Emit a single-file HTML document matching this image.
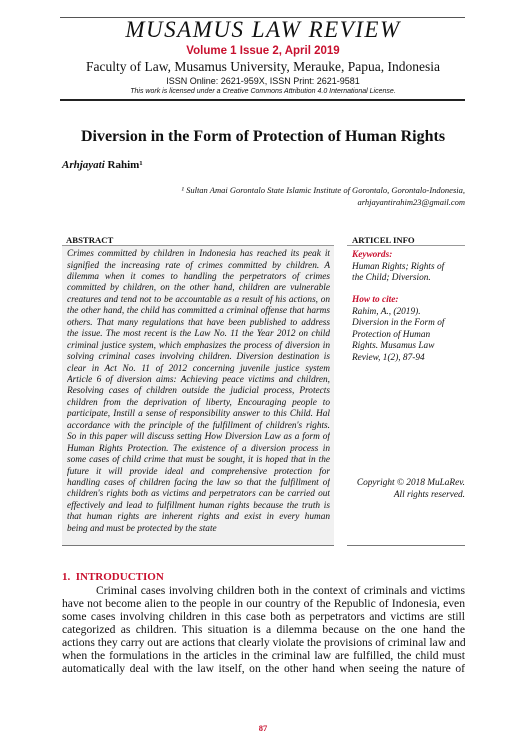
<!DOCTYPE html>
<html><head><meta charset="utf-8"><style>
*{margin:0;padding:0;box-sizing:border-box}
body{width:526px;height:751px;background:#fff;position:relative;font-family:"Liberation Serif",serif;color:#111;overflow:hidden}
.a{position:absolute;white-space:nowrap}
.j{position:absolute;text-align:justify;text-align-last:justify;white-space:nowrap;overflow:hidden}
.c{left:0;width:526px;text-align:center}
.ab .j{left:67px;width:263px;font-size:9.3px;font-style:italic;height:12px;line-height:12px}
.in .j{left:62px;width:403px;font-size:11.6px;height:14px;line-height:14px}
.inf{position:absolute;left:352px;font-size:9.3px;font-style:italic;line-height:11.5px}
.red{color:#c8102e}
</style></head><body>
<div class="a" style="left:60px;top:17px;width:405px;border-top:1px solid #555"></div>
<div class="a c" style="top:17px;font-size:23px;font-style:italic;letter-spacing:1.5px;font-family:'Liberation Serif',serif">MUSAMUS LAW REVIEW</div>
<div class="a c red" style="top:45px;font-size:11.5px;font-weight:bold;font-family:'Liberation Sans',sans-serif">Volume 1 Issue 2, April 2019</div>
<div class="a c" style="top:59px;font-size:13.5px">Faculty of Law, Musamus University, Merauke, Papua, Indonesia</div>
<div class="a c" style="top:76px;font-size:9px;font-family:'Liberation Sans',sans-serif">ISSN Online: 2621-959X, ISSN Print: 2621-9581</div>
<div class="a c" style="top:88px;font-size:7px;font-style:italic;font-family:'Liberation Sans',sans-serif">This work is licensed under a Creative Commons Attribution 4.0 International License.</div>
<div class="a" style="left:60px;top:99px;width:405px;border-top:2px solid #222"></div>
<div class="a c" style="top:128px;font-size:16px;font-weight:bold">Diversion in the Form of Protection of Human Rights</div>
<div class="a" style="left:62px;top:159px;font-size:11px;font-weight:bold"><i>Arhjayati</i> Rahim¹</div>
<div class="a" style="right:61px;top:185px;font-size:8.5px;font-style:italic;text-align:right;line-height:11.5px">¹ Sultan Amai Gorontalo State Islamic Institute of Gorontalo, Gorontalo-Indonesia,<br>arhjayantirahim23@gmail.com</div>

<div class="a" style="left:66px;top:235px;font-size:8.7px;font-weight:bold">ABSTRACT</div>
<div class="a" style="left:62px;top:245px;width:272px;height:301px;background:#f1f1f1;border-top:1px solid #999;border-bottom:1px solid #777"></div>
<div class="a" style="left:352px;top:235px;font-size:8.7px;font-weight:bold">ARTICEL INFO</div>
<div class="a" style="left:347px;top:245px;width:118px;border-top:1px solid #999"></div>
<div class="a" style="left:347px;top:545px;width:118px;border-top:1px solid #777"></div>

<div class="ab">
<div class="j" style="top:248px">Crimes committed by children in Indonesia has reached its peak it</div>
<div class="j" style="top:259.5px">signified the increasing rate of crimes committed by children. A</div>
<div class="j" style="top:271px">dilemma when it comes to handling the perpetrators of crimes</div>
<div class="j" style="top:282.4px">committed by children, on the other hand, children are vulnerable</div>
<div class="j" style="top:293.8px">creatures and tend not to be accountable as a result of his actions, on</div>
<div class="j" style="top:305.2px">the other hand, the child has committed a criminal offense that harms</div>
<div class="j" style="top:316.7px">others. That many regulations that have been published to address</div>
<div class="j" style="top:328.1px">the issue. The most recent is the Law No. 11 the Year 2012 on child</div>
<div class="j" style="top:339.6px">criminal justice system, which emphasizes the process of diversion in</div>
<div class="j" style="top:351px">solving criminal cases involving children. Diversion destination is</div>
<div class="j" style="top:362.5px">clear in Act No. 11 of 2012 concerning juvenile justice system</div>
<div class="j" style="top:374px">Article 6 of diversion aims: Achieving peace victims and children,</div>
<div class="j" style="top:385.4px">Resolving cases of children outside the judicial process, Protects</div>
<div class="j" style="top:396.8px">children from the deprivation of liberty, Encouraging people to</div>
<div class="j" style="top:408.3px">participate, Instill a sense of responsibility answer to this Child. Hal</div>
<div class="j" style="top:419.7px">accordance with the principle of the fulfillment of children's rights.</div>
<div class="j" style="top:431.2px">So in this paper will discuss setting How Diversion Law as a form of</div>
<div class="j" style="top:442.6px">Human Rights Protection. The existence of a diversion process in</div>
<div class="j" style="top:454px">some cases of child crime that must be sought, it is hoped that in the</div>
<div class="j" style="top:465.5px">future it will provide ideal and comprehensive protection for</div>
<div class="j" style="top:477px">handling cases of children facing the law so that the fulfillment of</div>
<div class="j" style="top:488.4px">children's rights both as victims and perpetrators can be carried out</div>
<div class="j" style="top:499.8px">effectively and lead to fulfillment human rights because the truth is</div>
<div class="j" style="top:511.3px">that human rights are inherent rights and exist in every human</div>
<div class="j" style="top:522.7px;text-align-last:left">being and must be protected by the state</div>
</div>

<div class="inf" style="top:250px"><b class="red">Keywords:</b><br>Human Rights; Rights of<br>the Child; Diversion.</div>
<div class="inf" style="top:295px"><b class="red">How to cite:</b><br>Rahim, A., (2019).<br>Diversion in the Form of<br>Protection of Human<br>Rights. Musamus Law<br>Review, 1(2), 87-94</div>
<div class="inf" style="left:auto;right:61px;top:478px;text-align:right">Copyright © 2018 MuLaRev.<br>All rights reserved.</div>

<div class="a red" style="left:62px;top:571px;font-size:11px;font-weight:bold">1.&nbsp; INTRODUCTION</div>
<div class="in">
<div class="j" style="top:584px;left:96px;width:369px">Criminal cases involving children both in the context of criminals and victims</div>
<div class="j" style="top:597px">have not become alien to the people in our country of the Republic of Indonesia, even</div>
<div class="j" style="top:610px">some cases involving children in this case both as perpetrators and victims are still</div>
<div class="j" style="top:623px">categorized as children. This situation is a dilemma because on the one hand the</div>
<div class="j" style="top:636px">actions they carry out are actions that clearly violate the provisions of criminal law and</div>
<div class="j" style="top:649px">when the formulations in the articles in the criminal law are fulfilled, the child must</div>
<div class="j" style="top:662px">automatically deal with the law itself, on the other hand when seeing the nature of</div>
</div>
<div class="a c red" style="top:723px;font-size:8.5px;font-weight:bold">87</div>
</body></html>
